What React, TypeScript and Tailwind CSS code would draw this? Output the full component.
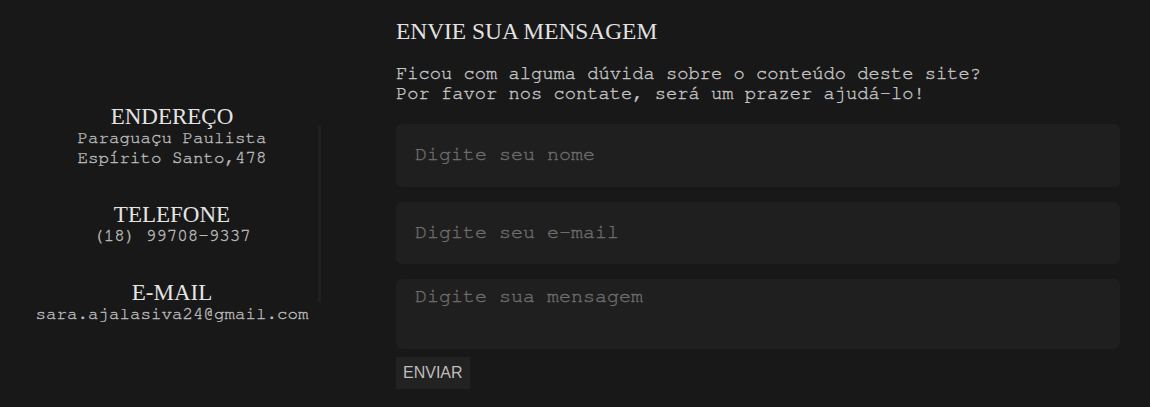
import React from "react";

const serif = "font-['Liberation_Serif','Times_New_Roman',serif]";
const mono =
  "font-['Nimbus_Mono_PS','FreeMono','Courier_New','Liberation_Mono',monospace] [-webkit-text-stroke:0.35px_currentColor]";

function InfoBlock({ title, lines }: { title: string; lines: string[] }) {
  return (
    <div className="flex flex-col items-center">
      <h3 className="font-['Liberation_Serif','Times_New_Roman',serif] text-[23px] leading-[23px] text-[#e4e4e4] font-normal">
        {title}
      </h3>
      {lines.map((l) => (
        <p
          key={l}
          className="font-['Nimbus_Mono_PS','FreeMono','Courier_New','Liberation_Mono',monospace] [-webkit-text-stroke:0.35px_currentColor] text-[17.5px] leading-[20px] text-[#bcbcbc] whitespace-nowrap"
        >
          {l}
        </p>
      ))}
    </div>
  );
}

export default function App() {
  return (
    <div className="w-[1150px] h-[407px] bg-[#181818] flex items-start pl-[26px] overflow-hidden">
      <div className="w-[292px] mt-[105px] flex flex-col items-center gap-[35px]">
        <InfoBlock title="ENDEREÇO" lines={["Paraguaçu Paulista", "Espírito Santo,478"]} />
        <InfoBlock title="TELEFONE" lines={["(18) 99708-9337"]} />
        <InfoBlock title="E-MAIL" lines={["sara.ajalasiva24@gmail.com"]} />
      </div>
      <div className="w-[3px] h-[178px] mt-[125px] bg-[#202020] rounded-full" />
      <form
        className="ml-[75px] w-[724px] pt-[20px] flex flex-col"
        onSubmit={(e) => e.preventDefault()}
      >
        <h2 className={`${serif} text-[23.4px] leading-[23px] text-[#e2e2e2] font-normal`}>
          ENVIE SUA MENSAGEM
        </h2>
        <p className={`${mono} mt-[21px] text-[18.75px] leading-[20px] text-[#c6c6c6]`}>
          Ficou com alguma dúvida sobre o conteúdo deste site?
          <br />
          Por favor nos contate, será um prazer ajudá-lo!
        </p>
        <div className="mt-[20px] flex flex-col gap-[15px]">
          <input
            type="text"
            placeholder="Digite seu nome"
            className={`${mono} h-[63px] w-full rounded-md bg-[#1f1f1f] px-[19px] pb-[3px] text-[20px] text-[#c6c6c6] placeholder:text-[#6e6e6e] outline-none`}
          />
          <input
            type="email"
            placeholder="Digite seu e-mail"
            className={`${mono} h-[62px] w-full rounded-md bg-[#1f1f1f] px-[19px] pb-[3px] text-[20px] text-[#c6c6c6] placeholder:text-[#6e6e6e] outline-none`}
          />
          <textarea
            placeholder="Digite sua mensagem"
            className={`${mono} h-[70px] w-full resize-none rounded-md bg-[#1f1f1f] px-[19px] pt-[6px] text-[20px] leading-[23px] text-[#c6c6c6] placeholder:text-[#6e6e6e] outline-none`}
          />
        </div>
        <div className="mt-[8px] flex">
          <button
            type="submit"
            className="h-[32px] px-[7px] bg-[#222222] text-[#bdbdbd] text-[16px] font-['Liberation_Sans',Arial,sans-serif]"
          >
            ENVIAR
          </button>
        </div>
      </form>
    </div>
  );
}
